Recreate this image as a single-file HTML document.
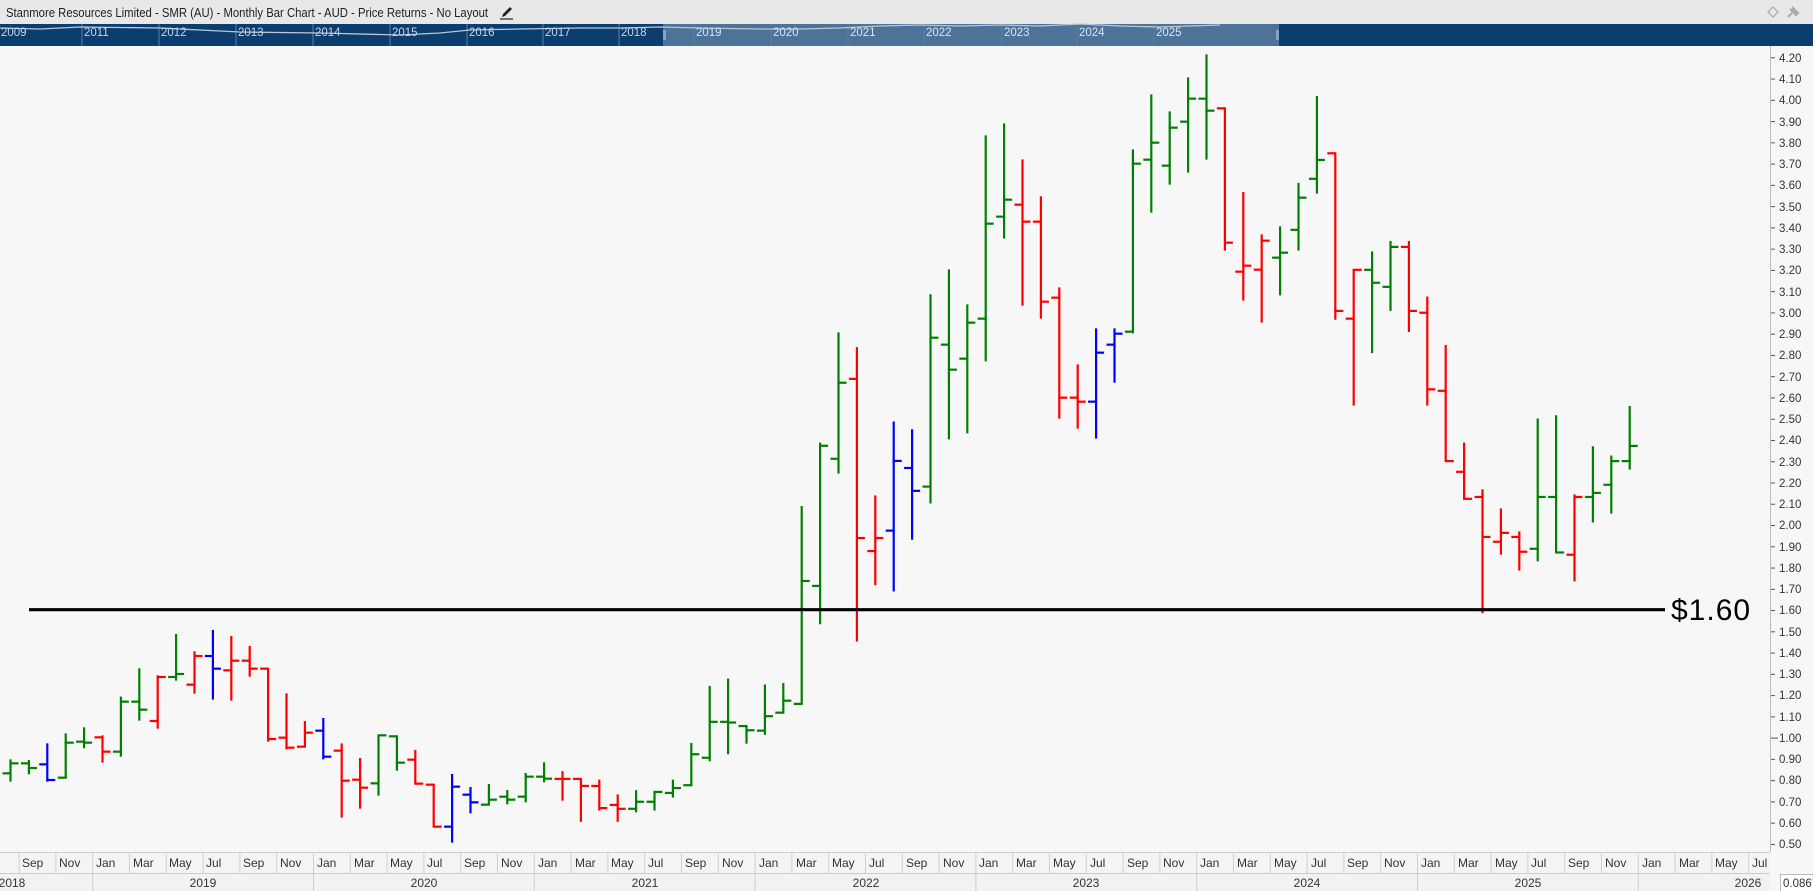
<!DOCTYPE html>
<html><head><meta charset="utf-8">
<style>
html,body{margin:0;padding:0;width:1813px;height:891px;overflow:hidden;background:#f7f7f7;font-family:"Liberation Sans",sans-serif;}
#top{position:absolute;left:0;top:0;width:1813px;height:24px;background:#e8e8e8;}
#title{position:absolute;left:6px;top:5px;font-size:13px;color:#222;white-space:nowrap;transform:scaleX(0.87);transform-origin:0 0;}
svg{position:absolute;left:0;top:0;}
</style></head><body>
<div id="top"><div id="title">Stanmore Resources Limited - SMR (AU) - Monthly Bar Chart - AUD - Price Returns - No Layout</div></div>
<svg id="s" width="1813" height="891" xmlns="http://www.w3.org/2000/svg" font-family="Liberation Sans, sans-serif">
<g transform="translate(500,5)"><path d="M2 12 L3 9 L10 2 L12 4 L5 11 Z" fill="#222"/><line x1="0" y1="14" x2="13" y2="14" stroke="#222" stroke-width="1.2"/></g>
<path d="M1773 7 L1778 12 L1773 17 L1768 12 Z" fill="none" stroke="#aaa" stroke-width="1.2"/>
<path d="M1788 17 L1792 13 M1790 9 L1797 16 M1793 8 L1798 13 L1795 14 L1792 11 Z" stroke="#aaa" stroke-width="2" fill="#aaa"/>
<rect x="0" y="24" width="1813" height="22" fill="#0b3d6e"/>
<rect x="663" y="24" width="616" height="22" fill="#4d7399"/>
<g stroke="#5a7fa5" stroke-width="1">
<line x1="82" y1="24" x2="82" y2="46"/><line x1="159" y1="24" x2="159" y2="46"/><line x1="236" y1="24" x2="236" y2="46"/><line x1="313" y1="24" x2="313" y2="46"/><line x1="390" y1="24" x2="390" y2="46"/><line x1="467" y1="24" x2="467" y2="46"/><line x1="543" y1="24" x2="543" y2="46"/><line x1="619" y1="24" x2="619" y2="46"/><line x1="694" y1="24" x2="694" y2="46"/><line x1="771" y1="24" x2="771" y2="46"/><line x1="848" y1="24" x2="848" y2="46"/><line x1="924" y1="24" x2="924" y2="46"/><line x1="1002" y1="24" x2="1002" y2="46"/><line x1="1077" y1="24" x2="1077" y2="46"/><line x1="1154" y1="24" x2="1154" y2="46"/>
</g>
<polyline fill="none" stroke="#b8c6d6" stroke-width="1.3" points="0,28 40,29 80,27 160,28 240,32 320,33 400,35 440,33 470,30 520,29 580,28 620,28 660,27 700,28 760,29 800,29 840,28 880,26 920,25 960,26 1000,25 1040,26 1080,24 1120,26 1160,27 1220,25"/>
<g font-size="11.5" fill="#c9d5e2">
<text x="1" y="36">2009</text><text x="84" y="36">2011</text><text x="161" y="36">2012</text><text x="238" y="36">2013</text><text x="315" y="36">2014</text><text x="392" y="36">2015</text><text x="469" y="36">2016</text><text x="545" y="36">2017</text><text x="621" y="36">2018</text>
</g>
<g font-size="11.5" fill="#dbe4ee">
<text x="696" y="36">2019</text><text x="773" y="36">2020</text><text x="850" y="36">2021</text><text x="926" y="36">2022</text><text x="1004" y="36">2023</text><text x="1079" y="36">2024</text><text x="1156" y="36">2025</text>
</g>
<rect x="663" y="30" width="3" height="10" fill="#8aa4c0"/><rect x="1276" y="30" width="3" height="10" fill="#8aa4c0"/>
<line x1="1770.5" y1="46" x2="1770.5" y2="852" stroke="#bbb"/>
<g id="bars"></g>
<line x1="29" y1="609.7" x2="1665" y2="609.7" stroke="#000" stroke-width="3.2"/>
<text x="1671" y="620" font-size="30" letter-spacing="1" fill="#000">$1.60</text>
<g font-size="11.5" fill="#333" id="yl">
<text x="1779" y="62">4.20</text><text x="1779" y="83">4.10</text><text x="1779" y="104">4.00</text><text x="1779" y="126">3.90</text><text x="1779" y="147">3.80</text><text x="1779" y="168">3.70</text><text x="1779" y="189">3.60</text><text x="1779" y="211">3.50</text><text x="1779" y="232">3.40</text><text x="1779" y="253">3.30</text><text x="1779" y="274">3.20</text><text x="1779" y="296">3.10</text><text x="1779" y="317">3.00</text><text x="1779" y="338">2.90</text><text x="1779" y="359">2.80</text><text x="1779" y="381">2.70</text><text x="1779" y="402">2.60</text><text x="1779" y="423">2.50</text><text x="1779" y="444">2.40</text><text x="1779" y="466">2.30</text><text x="1779" y="487">2.20</text><text x="1779" y="508">2.10</text><text x="1779" y="529">2.00</text><text x="1779" y="551">1.90</text><text x="1779" y="572">1.80</text><text x="1779" y="593">1.70</text><text x="1779" y="614">1.60</text><text x="1779" y="636">1.50</text><text x="1779" y="657">1.40</text><text x="1779" y="678">1.30</text><text x="1779" y="699">1.20</text><text x="1779" y="721">1.10</text><text x="1779" y="742">1.00</text><text x="1779" y="763">0.90</text><text x="1779" y="784">0.80</text><text x="1779" y="806">0.70</text><text x="1779" y="827">0.60</text><text x="1779" y="848">0.50</text>
</g>
<g id="yt" stroke="#555"></g>
<rect x="0" y="852" width="1770" height="21" fill="#f4f4f4"/>
<rect x="0" y="873" width="1770" height="18" fill="#f2f2f2"/>
<line x1="0" y1="852.5" x2="1770" y2="852.5" stroke="#ccc"/>
<line x1="0" y1="873.5" x2="1770" y2="873.5" stroke="#ccc"/>
<g id="msep" stroke="#d0d0d0"></g>
<g font-size="12" fill="#333">
<text x="22" y="867">Sep</text><text x="59" y="867">Nov</text><text x="96" y="867">Jan</text><text x="133" y="867">Mar</text><text x="169" y="867">May</text><text x="206" y="867">Jul</text><text x="243" y="867">Sep</text><text x="280" y="867">Nov</text><text x="317" y="867">Jan</text><text x="354" y="867">Mar</text><text x="390" y="867">May</text><text x="427" y="867">Jul</text><text x="464" y="867">Sep</text><text x="501" y="867">Nov</text><text x="538" y="867">Jan</text><text x="575" y="867">Mar</text><text x="611" y="867">May</text><text x="648" y="867">Jul</text><text x="685" y="867">Sep</text><text x="722" y="867">Nov</text><text x="759" y="867">Jan</text><text x="796" y="867">Mar</text><text x="832" y="867">May</text><text x="869" y="867">Jul</text><text x="906" y="867">Sep</text><text x="943" y="867">Nov</text><text x="979" y="867">Jan</text><text x="1016" y="867">Mar</text><text x="1053" y="867">May</text><text x="1090" y="867">Jul</text><text x="1127" y="867">Sep</text><text x="1163" y="867">Nov</text><text x="1200" y="867">Jan</text><text x="1237" y="867">Mar</text><text x="1274" y="867">May</text><text x="1311" y="867">Jul</text><text x="1347" y="867">Sep</text><text x="1384" y="867">Nov</text><text x="1421" y="867">Jan</text><text x="1458" y="867">Mar</text><text x="1495" y="867">May</text><text x="1531" y="867">Jul</text><text x="1568" y="867">Sep</text><text x="1605" y="867">Nov</text><text x="1642" y="867">Jan</text><text x="1679" y="867">Mar</text><text x="1715" y="867">May</text><text x="1752" y="867">Jul</text>
</g>
<g stroke="#ccc">
<line x1="92.7" y1="873" x2="92.7" y2="891"/><line x1="313.5" y1="873" x2="313.5" y2="891"/><line x1="534.3" y1="873" x2="534.3" y2="891"/><line x1="755.1" y1="873" x2="755.1" y2="891"/><line x1="975.9" y1="873" x2="975.9" y2="891"/><line x1="1196.7" y1="873" x2="1196.7" y2="891"/><line x1="1417.5" y1="873" x2="1417.5" y2="891"/><line x1="1638.3" y1="873" x2="1638.3" y2="891"/>
</g>
<g font-size="12" fill="#333" text-anchor="middle">
<text x="12" y="887">2018</text><text x="203" y="887">2019</text><text x="424" y="887">2020</text><text x="645" y="887">2021</text><text x="866" y="887">2022</text><text x="1086" y="887">2023</text><text x="1307" y="887">2024</text><text x="1528" y="887">2025</text><text x="1748" y="887">2026</text>
</g>
<rect x="1780.5" y="874.5" width="40" height="17" fill="#fff" stroke="#bbb"/>
<text x="1783" y="887" font-size="11.5" fill="#333">0.0867</text>
</svg>
<script>
(function(){
var NS="http://www.w3.org/2000/svg";
var conv={a:function(v){return 440+v/3},b:function(v){return 300+v/2.84},c:function(v){return 46+v/3},d:function(v){return 46+v/2.703},r:function(v){return v}};
var G="#008000",R="#ff0000",B="#0000ff";
var D=[
[0,'a',958,1025,1000,970,G],[1,'a',960,1003,970,984,G],[2,'a',910,1025,973,1020,B],[3,'a',880,1015,1013,908,G],[4,'a',862,925,905,908,G],
[5,'a',886,968,892,935,R],[6,'a',770,950,935,785,G],[7,'a',685,842,785,809,G],[8,'a',706,866,843,711,R],[9,'a',582,722,711,702,G],
[10,'a',634,761,734,648,R],[11,'a',570,779,648,686,B],[12,'a',588,782,691,662,R],[13,'a',618,710,662,686,R],[14,'a',686,905,686,897,R],
[15,'a',760,928,893,923,R],[16,'a',843,921,920,878,R],[17,'a',834,958,872,950,B],[18,'a',910,1133,932,1022,R],[19,'a',954,1106,1019,1043,R],
[20,'a',886,1067,1030,886,G],[21,'a',889,992,889,968,G],[22,'a',930,1032,959,1031,R],[23,'a',1034,1161,1034,1160,R],[24,'a',1002,1208,1160,1040,B],
[25,'a',1041,1120,1064,1087,B],[26,'a',1032,1095,1094,1079,G],[27,'a',1050,1093,1070,1079,G],[28,'a',999,1087,1070,1010,G],[29,'a',967,1027,1010,1016,G],
[30,'b',1338,1422,1360,1360,R],[31,'b',1360,1482,1360,1380,R],[32,'b',1362,1450,1380,1443,R],[33,'b',1404,1482,1434,1445,R],[34,'b',1392,1455,1445,1425,G],
[35,'b',1396,1450,1425,1397,G],[36,'b',1362,1413,1400,1386,G],[37,'b',1258,1380,1378,1290,G],[38,'b',1096,1310,1300,1198,G],[39,'b',1075,1290,1198,1200,G],
[40,'b',1208,1260,1210,1222,G],[41,'b',1092,1235,1223,1182,G],[42,'b',1088,1172,1172,1138,G],[43,'b',585,1147,1147,798,G],[44,'b',405,921,812,414,G],
[45,'b',92,493,451,235,G],[46,'b',134,970,224,676,R],[47,'b',555,810,713,676,R],[48,'b',345,828,655,457,B],[49,'b',367,681,477,542,B],
[50,'r',294.3,503.5,486.6,337.7,G],
[51,'c',670,1180,896,971,G],[52,'c',775,1162,938,830,G],[53,'c',268,946,818,533,G],[54,'c',232,578,512,461,G],
[55,'c',340,779,476,527,R],[56,'c',451,818,527,767,R],[57,'c',724,1118,755,1055,R],[58,'c',955,1148,1055,1067,R],[59,'c',847,1178,1067,920,B],
[60,'c',847,1010,896,863,B],[61,'c',310,862,857,353,G],[62,'c',145,500,341,290,G],[63,'c',196,416,359,245,G],[64,'c',94,380,227,158,G],
[65,'c',25,341,158,194,G],[66,'c',185,614,187,590,R],[67,'c',438,764,677,659,R],[68,'c',565,830,671,584,R],[69,'c',541,748,635,620,G],
[70,'d',370,553,497,410,G],[71,'d',135,399,359,308,G],[72,'d',290,740,290,716,R],[73,'d',603,972,737,605,R],[74,'d',555,830,605,640,G],
[75,'d',527,716,651,543,G],[76,'d',527,773,543,716,R],[77,'d',677,972,721,928,R],[78,'d',808,1122,932,1122,R],[79,'d',1072,1224,1151,1224,R],
[80,'d',1198,1533,1219,1327,R],[81,'d',1250,1375,1340,1316,R],[82,'d',1312,1418,1327,1367,R],[83,'d',1007,1393,1359,1219,G],[84,'d',998,1369,1219,1369,G],
[85,'d',1212,1447,1375,1219,R],[86,'d',1082,1288,1219,1208,G],[87,'d',1107,1264,1186,1122,G],[88,'d',973,1145,1122,1081,G]
];
var g=document.getElementById('bars');
function ln(x1,y1,x2,y2,c,w,par){var l=document.createElementNS(NS,'line');l.setAttribute('x1',x1);l.setAttribute('y1',y1);l.setAttribute('x2',x2);l.setAttribute('y2',y2);l.setAttribute('stroke',c);l.setAttribute('stroke-width',w);(par||g).appendChild(l);}
D.forEach(function(d){var f=conv[d[1]];var x=10.5+18.4*d[0];var h=f(d[2]),lo=f(d[3]),o=f(d[4]),c=f(d[5]);
ln(x,h,x,lo,d[6],2.2);ln(x-8,o,x+1,o,d[6],2.2);ln(x-1,c,x+8,c,d[6],2.2);});
var yt=document.getElementById('yt');
for(var k=0;k<38;k++){var y=57.8+k*21.26;ln(1771,y,k==32?1778:1775,y,'#555',1,yt);}
var ms=document.getElementById('msep');
for(var m=1;m<=95;m+=2){var x=0.7+18.4*m;ln(x,852,x,873,'#d0d0d0',1,ms);}
})();
</script>
</body></html>
